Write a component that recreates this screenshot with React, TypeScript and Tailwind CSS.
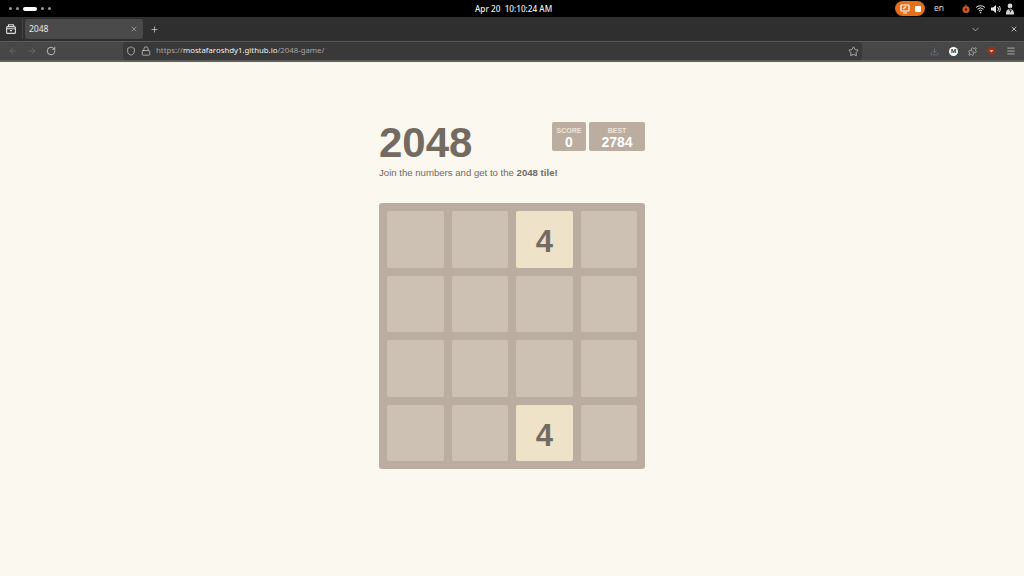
import React from "react";
import { Shield, Lock, Star, ArrowLeft, ArrowRight, RotateCw, X, Plus, ChevronDown, Download, Puzzle, Menu } from "lucide-react";

const sans = "font-['Liberation_Sans',Arial,sans-serif]";
const ui = "font-['Noto_Sans','Open_Sans',sans-serif]";
const cells = [0, 0, 4, 0, 0, 0, 0, 0, 0, 0, 0, 0, 0, 0, 4, 0];

function Top() {
  return (
    <div className={`h-[17px] bg-black flex items-center justify-between text-white ${ui} relative`}>
      <div className="flex items-center gap-[4px] pl-[9px]">
        <span className="w-[3px] h-[3px] rounded-full bg-[#9a9a9a]" />
        <span className="w-[3px] h-[3px] rounded-full bg-[#9a9a9a]" />
        <span className="w-[14px] h-[4px] rounded-full bg-white" />
        <span className="w-[3px] h-[3px] rounded-full bg-[#9a9a9a]" />
        <span className="w-[3px] h-[3px] rounded-full bg-[#9a9a9a]" />
      </div>
      <div className="absolute left-[475px] top-0 h-[17px] leading-[17px] text-[8.2px] font-medium text-[#eeeeee] whitespace-nowrap">Apr 20&nbsp; 10:10:24 AM</div>
      <div className="flex items-center pr-[9px]">
        <div className="w-[30px] h-[15px] rounded-full bg-[#e2701c] flex items-center justify-center gap-[5px] mr-[-1px]">
          <svg width="10" height="10" viewBox="0 0 10 10" fill="none" stroke="white" strokeWidth="1.2"><rect x="1" y="1" width="8" height="6" rx="0.5" /><path d="M3 9h4M3 5l3-2.5" /></svg>
          <span className="w-[6px] h-[6px] rounded-[1px] bg-white" />
        </div>
        <span className="text-[8.5px] text-[#dddddd] w-[30px] text-center mr-[7px]">en</span>
        <svg width="10" height="11" viewBox="0 0 10 11" className="mr-[4px]"><circle cx="5" cy="6.5" r="3.5" fill="#d4571c" /><path d="M3 3.5 5 1l2 2.5z" fill="#7a3a1c" /><circle cx="5" cy="6.5" r="1.2" fill="#3a1c10" /></svg>
        <svg width="11" height="10" viewBox="0 0 11 10" fill="none" stroke="#e8e8e8" className="mr-[4px]"><path d="M1 3.5a6.5 6.5 0 0 1 9 0M2.5 5.2a4.4 4.4 0 0 1 6 0M4 6.9a2.2 2.2 0 0 1 3 0" /><circle cx="5.5" cy="8.5" r="0.8" fill="#e8e8e8" stroke="none" /></svg>
        <svg width="11" height="10" viewBox="0 0 11 10" fill="none" className="mr-[4px]"><path d="M1 3.5h2L6 1v8L3 6.5H1z" fill="#e8e8e8" /><path d="M7.5 3a2.6 2.6 0 0 1 0 4M9 2a4.2 4.2 0 0 1 0 6" stroke="#e8e8e8" /></svg>
        <svg width="10" height="12" viewBox="0 0 10 12"><circle cx="5" cy="3" r="2.4" fill="#d8d8d8" /><path d="M1 11.5c0-4 1.5-5.5 4-5.5s4 1.500 4 5.500z" fill="#d8d8d8" /><path d="M5.500 4 3.500 7.500h1.700l-.5 3L7 6.800H5.300z" fill="#222" /></svg>
      </div>
    </div>
  );
}

function Tabs() {
  return (
    <div className={`h-[24px] bg-[#2f2f2f] flex items-center ${ui} pl-[6px]`}>
      <svg width="10" height="10" viewBox="0 0 10 10" fill="none" stroke="#dddddd" strokeWidth="1.1"><rect x="0.6" y="2.6" width="8.8" height="6.8" rx="1" /><path d="M2.5 2.6V.8h5v1.8M0.6 4.8h8.8M4 6.6h2" /></svg>
      <div className="w-px h-[20px] bg-[#444444] ml-[6px] mr-[2px]" />
      <div className="w-[118px] h-[20px] bg-[#4a4a4a] rounded-[3px] flex items-center justify-between pl-[4px] pr-[5px]">
        <span className="text-[8.5px] text-[#e8e8e8]">2048</span>
        <X size={8} color="#c8c8c8" strokeWidth={1.6} />
      </div>
      <Plus size={9} color="#e0e0e0" strokeWidth={1.8} className="ml-[7px]" />
      <div className="flex-1" />
      <ChevronDown size={11} color="#cccccc" strokeWidth={1.6} className="mr-[29px]" />
      <X size={8} color="#e8e8e8" strokeWidth={2.2} className="mr-[6px]" />
    </div>
  );
}

function Nav() {
  return (
    <div className={`h-[21px] bg-[#474747] border-t border-[#5a5a5a] border-b-2 border-b-[#5f5f5f] flex items-center ${ui} pl-[8px]`}>
      <ArrowLeft size={10} color="#767676" strokeWidth={1.6} />
      <ArrowRight size={10} color="#767676" strokeWidth={1.6} className="ml-[9px]" />
      <RotateCw size={10} color="#dddddd" strokeWidth={1.8} className="ml-[9px]" />
      <div className="w-[739px] h-[18px] bg-[#393939] rounded-[3px] flex items-center pl-[3px] pr-[3px] ml-[67px]">
        <Shield size={10} color="#dddddd" strokeWidth={1.6} />
        <Lock size={10} color="#dddddd" strokeWidth={1.6} className="ml-[5px]" />
        <span className="ml-[5px] text-[7.8px] text-[#a5a5a5] whitespace-nowrap">
          https://<span className="text-[#eeeeee]">mostafaroshdy1.github.io</span>/2048-game/
        </span>
        <div className="flex-1" />
        <Star size={11} color="#dddddd" strokeWidth={1.5} />
      </div>
      <div className="flex-1" />
      <Download size={9} color="#787f88" strokeWidth={1.6} className="mr-[10px]" />
      <span className="w-[9px] h-[9px] rounded-full bg-white flex items-center justify-center mr-[10px]">
        <span className="text-[6px] leading-none font-bold text-[#333333]">M</span>
      </span>
      <Puzzle size={9} color="#dddddd" strokeWidth={1.6} className="mr-[10px]" />
      <svg width="9" height="10" viewBox="0 0 9 10" className="mr-[10px]"><path d="M.5 1.500 4.500.5l4 1V6L4.500 9.500.5 6z" fill="#9c2f1b" /><path d="M2.500 4h4L4.500 6.500z" fill="#d8c6b8" /></svg>
      <Menu size={10} color="#cccccc" strokeWidth={1.8} className="mr-[8px]" />
    </div>
  );
}

function Score({ label, value, w }: { label: string; value: string; w: string }) {
  return (
    <div className={`${w} h-[29px] bg-[#bbada0] rounded-[2px] flex flex-col items-center justify-center text-center pt-[2px]`}>
      <div className="text-[7px] leading-[8px] font-bold text-[#eee4da]">{label}</div>
      <div className="text-[14px] leading-[14px] font-bold text-white">{value}</div>
    </div>
  );
}

export default function App() {
  return (
    <div className="w-[1024px] h-[576px] overflow-hidden bg-[#fbf8ef] flex flex-col">
      <Top />
      <Tabs />
      <Nav />
      <main className={`flex-1 flex flex-col items-center ${sans} text-[#736a62]`}>
        <div className="w-[266px] mt-[60px]">
          <div className="flex items-start justify-between h-[44px]">
            <h1 className="text-[42px] leading-[42px] font-bold">2048</h1>
            <div className="flex gap-[3px]">
              <Score label="SCORE" value="0" w="w-[34px]" />
              <Score label="BEST" value="2784" w="w-[56px]" />
            </div>
          </div>
          <p className="text-[9.6px] leading-[14px]">
            Join the numbers and get to the <b>2048 tile!</b>
          </p>
          <div className="mt-[23px] w-[266px] h-[266px] bg-[#bbada0] rounded-[3px] p-[8px] grid grid-cols-4 grid-rows-4 gap-[8px]">
            {cells.map((c, i) => (
              <div
                key={i}
                className={`rounded-[2px] flex items-center justify-center pt-[5px] text-[31px] leading-[31px] font-bold ${c ? "bg-[#eee3c8]" : "bg-[#cdc1b4]"}`}
              >
                {c ? c : null}
              </div>
            ))}
          </div>
        </div>
      </main>
    </div>
  );
}
